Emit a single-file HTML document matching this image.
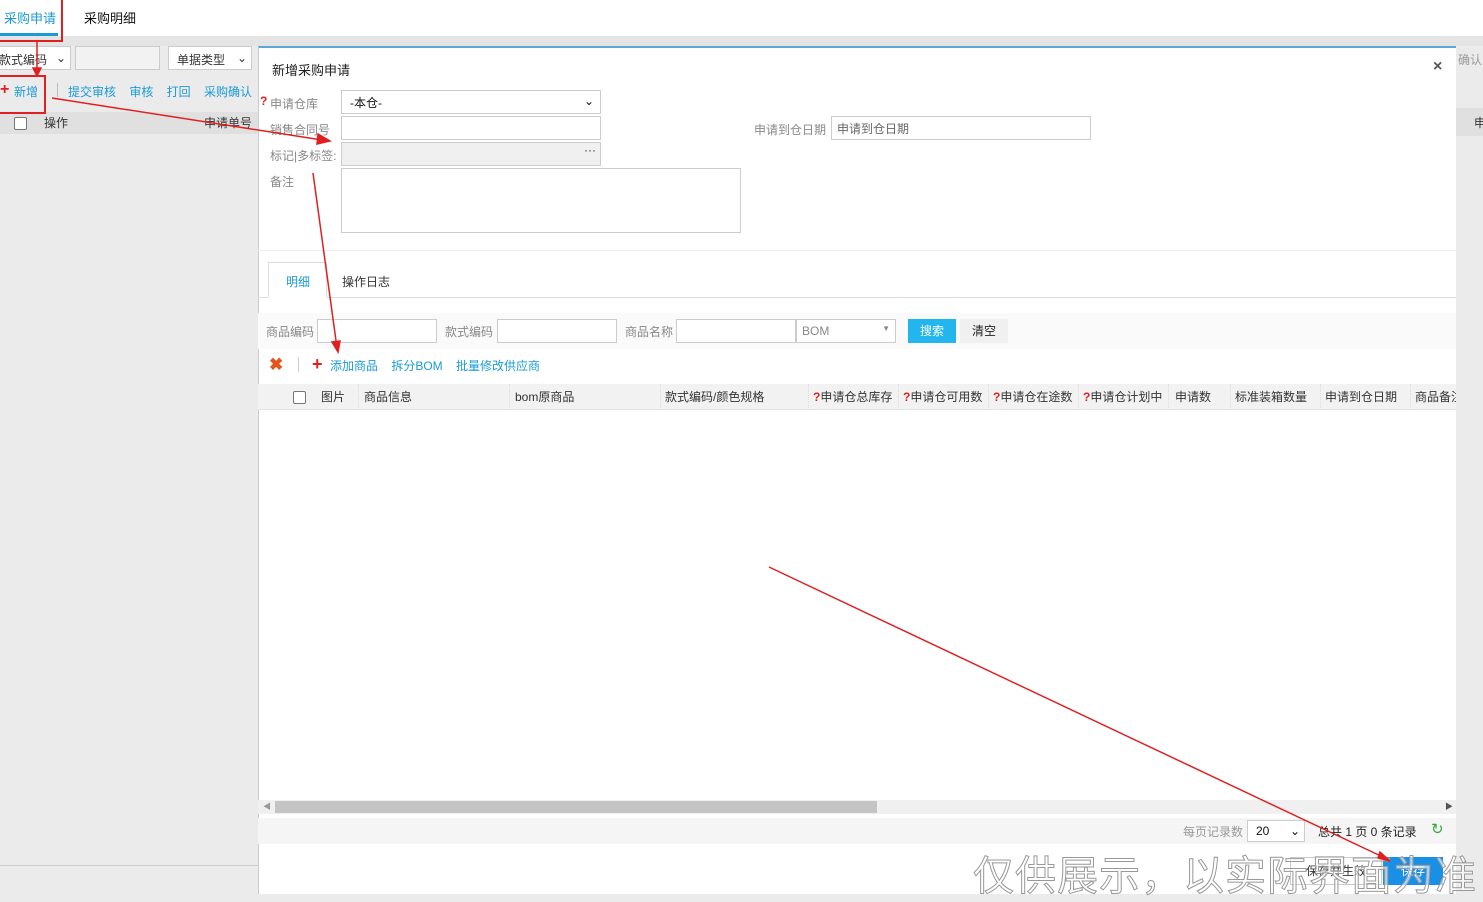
<!DOCTYPE html>
<html><head><meta charset="utf-8"><style>
*{box-sizing:border-box;margin:0;padding:0}
body{width:1483px;height:898px;overflow:hidden;background:#ebebeb;font-family:"Liberation Sans","Noto Sans CJK SC",sans-serif;font-size:12px;color:#333;position:relative}
.a{position:absolute}
.inp{position:absolute;background:#fff;border:1px solid #ccc;height:24px}
.lbl{position:absolute;color:#888;font-size:12px}
.blue{color:#1a9bd7}
.th{position:absolute;top:384px;height:26px;line-height:26px;border-right:1px dotted #ddd;padding-left:4px;white-space:nowrap;overflow:hidden}
.q{color:#d22;font-weight:bold}
</style></head><body>
<div class="a" style="left:0;top:0;width:1483px;height:36px;background:#fff"></div>
<div class="a blue" style="left:4px;top:8px;font-size:13px">采购申请</div>
<div class="a" style="left:0;top:33px;width:58px;height:3px;background:#1a9bd7"></div>
<div class="a" style="left:84px;top:8px;font-size:13px;color:#111">采购明细</div>
<div class="a" style="left:0;top:36px;width:1483px;height:10px;background:#e4e4e4"></div>
<div class="inp" style="left:-4px;top:46px;width:75px;height:24px;padding:4px 0 0 2px">款式编码 <span style="float:right;margin-right:4px">⌄</span></div>
<div class="inp" style="left:75px;top:46px;width:85px;height:24px;background:#f2f2f2"></div>
<div class="inp" style="left:168px;top:46px;width:84px;height:24px;padding:4px 0 0 8px">单据类型 <span style="float:right;margin-right:4px">⌄</span></div>
<div class="a" style="left:0;top:83px;color:#e02020;font-size:16px;font-weight:bold;line-height:14px">+</div>
<div class="a blue" style="left:14px;top:83px">新增</div>
<div class="a" style="left:57px;top:83px;width:1px;height:14px;background:#bbb"></div>
<div class="a blue" style="left:68px;top:83px">提交审核 &nbsp;&nbsp; 审核 &nbsp;&nbsp; 打回 &nbsp;&nbsp; 采购确认</div>
<div class="a" style="left:0;top:112px;width:258px;height:22px;background:#e0e0e0"></div>
<div class="a" style="left:14px;top:117px;width:13px;height:13px;border:1px solid #777;background:#fff;border-radius:2px"></div>
<div class="a" style="left:44px;top:114px">操作</div>
<div class="a" style="left:204px;top:114px">申请单号</div>
<div class="a" style="left:0;top:865px;width:258px;height:1px;background:#ccc"></div>
<div class="a" style="left:1456px;top:46px;width:27px;height:852px;background:#ebebeb"></div>
<div class="a" style="left:1458px;top:51px;color:#999">确认</div>
<div class="a" style="left:1456px;top:108px;width:27px;height:28px;background:#e0e0e0"></div>
<div class="a" style="left:1474px;top:114px">申</div>
<!-- modal -->
<div class="a" style="left:258px;top:46px;width:1198px;height:848px;background:#fff;border-top:2px solid #5fa8d3;border-left:1px solid #ccc"></div>
<div class="a" style="left:272px;top:60px;font-size:13px;color:#222">新增采购申请</div>
<div class="a" style="left:1433px;top:58px;font-size:16px;color:#555;font-weight:bold">×</div>
<div class="a q" style="left:260px;top:94px">?</div>
<div class="lbl" style="left:270px;top:95px">申请仓库</div>
<div class="inp" style="left:341px;top:90px;width:260px;padding:3px 0 0 8px;color:#111">-本仓- <span style="float:right;margin-right:6px">⌄</span></div>
<div class="lbl" style="left:270px;top:121px">销售合同号</div>
<div class="inp" style="left:341px;top:116px;width:260px"></div>
<div class="lbl" style="left:270px;top:147px">标记|多标签:</div>
<div class="inp" style="left:341px;top:142px;width:260px;background:#f0f0f0;text-align:right;padding-right:4px">···</div>
<div class="lbl" style="left:270px;top:173px">备注</div>
<div class="inp" style="left:341px;top:168px;width:400px;height:65px"></div>
<div class="lbl" style="left:754px;top:121px">申请到仓日期</div>
<div class="inp" style="left:831px;top:116px;width:260px;padding:3px 0 0 5px;color:#666">申请到仓日期</div>
<div class="a" style="left:258px;top:250px;width:1198px;height:1px;background:#eee"></div>
<div class="a" style="left:258px;top:297px;width:1198px;height:1px;background:#ddd"></div>
<div class="a" style="left:268px;top:262px;width:59px;height:36px;border:1px solid #ddd;border-bottom:1px solid #fff;background:#fff"></div>
<div class="a blue" style="left:286px;top:273px">明细</div>
<div class="a" style="left:342px;top:273px">操作日志</div>
<div class="a" style="left:258px;top:313px;width:1198px;height:36px;background:#fafafa"></div>
<div class="lbl" style="left:266px;top:323px">商品编码</div>
<div class="inp" style="left:317px;top:319px;width:120px"></div>
<div class="lbl" style="left:445px;top:323px">款式编码</div>
<div class="inp" style="left:497px;top:319px;width:120px"></div>
<div class="lbl" style="left:625px;top:323px">商品名称</div>
<div class="inp" style="left:676px;top:319px;width:120px"></div>
<div class="inp" style="left:796px;top:319px;width:100px;color:#888;padding:4px 0 0 5px">BOM<span style="float:right;margin-right:5px;font-size:8px">▼</span></div>
<div class="a" style="left:908px;top:319px;width:48px;height:24px;background:#22b5ee;color:#fff;text-align:center;line-height:24px">搜索</div>
<div class="a" style="left:960px;top:319px;width:48px;height:24px;background:#f0f0f0;text-align:center;line-height:24px;color:#222">清空</div>
<div class="a" style="left:269px;top:355px;color:#e5541a;font-size:17px;font-weight:bold">✖</div>
<div class="a" style="left:298px;top:357px;width:1px;height:15px;background:#ccc"></div>
<div class="a" style="left:312px;top:354px;color:#d22;font-size:18px;font-weight:bold">+</div>
<div class="a blue" style="left:330px;top:357px">添加商品 &nbsp;&nbsp; 拆分BOM &nbsp;&nbsp; 批量修改供应商</div>
<div class="a" style="left:258px;top:384px;width:1198px;height:26px;background:#f2f2f2;border-bottom:1px solid #e4e4e4"></div>
<div class="a" style="left:293px;top:391px;width:13px;height:13px;border:1px solid #777;background:#fff;border-radius:2px"></div>
<div class="th" style="left:317px;width:42px">图片</div>
<div class="th" style="left:360px;width:150px">商品信息</div>
<div class="th" style="left:511px;width:150px">bom原商品</div>
<div class="th" style="left:661px;width:148px">款式编码/颜色规格</div>
<div class="th" style="left:809px;width:90px"><span class="q">?</span>申请仓总库存</div>
<div class="th" style="left:899px;width:90px"><span class="q">?</span>申请仓可用数</div>
<div class="th" style="left:989px;width:90px"><span class="q">?</span>申请仓在途数</div>
<div class="th" style="left:1079px;width:90px"><span class="q">?</span>申请仓计划中</div>
<div class="th" style="left:1171px;width:60px">申请数</div>
<div class="th" style="left:1231px;width:90px">标准装箱数量</div>
<div class="th" style="left:1321px;width:90px">申请到仓日期</div>
<div class="th" style="left:1411px;width:45px;border:0">商品备注</div>
<div class="a" style="left:258px;top:800px;width:1198px;height:14px;background:#f0f0f0"></div>
<div class="a" style="left:275px;top:801px;width:602px;height:12px;background:#c4c4c4"></div>
<div class="a" style="left:263px;top:801px;font-size:8px;color:#999">◀</div>
<div class="a" style="left:1445px;top:801px;font-size:8px;color:#555">▶</div>
<div class="a" style="left:258px;top:818px;width:1198px;height:26px;background:#f5f5f5"></div>
<div class="lbl" style="left:1183px;top:823px;color:#999">每页记录数</div>
<div class="inp" style="left:1247px;top:820px;width:58px;height:22px;padding:3px 0 0 8px;color:#111">20<span style="float:right;margin-right:4px">⌄</span></div>
<div class="a" style="left:1318px;top:823px;color:#222">总共 1 页 0 条记录</div>
<div class="a" style="left:1431px;top:820px;color:#3a3;font-size:15px">↻</div>
<div class="a" style="left:1290px;top:857px;width:92px;height:28px;border:1px solid #ccc;background:#fff;text-align:center;line-height:26px">保存并生效</div>
<div class="a" style="left:1383px;top:857px;width:60px;height:28px;background:#1a8fe6;color:#fff;text-align:center;line-height:28px">保存</div>
<div class="a" style="left:973px;top:842px;font-size:41px;color:rgba(255,255,255,.6);-webkit-text-stroke:1px #999;letter-spacing:1px;white-space:nowrap">仅供展示，以实际界面为准</div>
<div class="a" style="left:-2px;top:-2px;width:65px;height:44px;border:2px solid #e02020"></div>
<div class="a" style="left:-2px;top:75px;width:48px;height:39px;border:2px solid #e02020"></div>
<svg class="a" style="left:0;top:0" width="1483" height="898">
<g stroke="#e02020" stroke-width="1.5" fill="#e02020">
<line x1="37" y1="40" x2="37" y2="72"/><polygon points="33,68 41,68 37,76"/>
<line x1="52" y1="98" x2="322" y2="140"/><polygon points="318,134 330,141 317,144"/>
<line x1="313" y1="173" x2="337" y2="348"/><polygon points="332,342 340,341 338,352"/>
<line x1="769" y1="567" x2="1385" y2="858"/><polygon points="1380,852 1390,861 1378,858"/>
</g></svg>
</body></html>
